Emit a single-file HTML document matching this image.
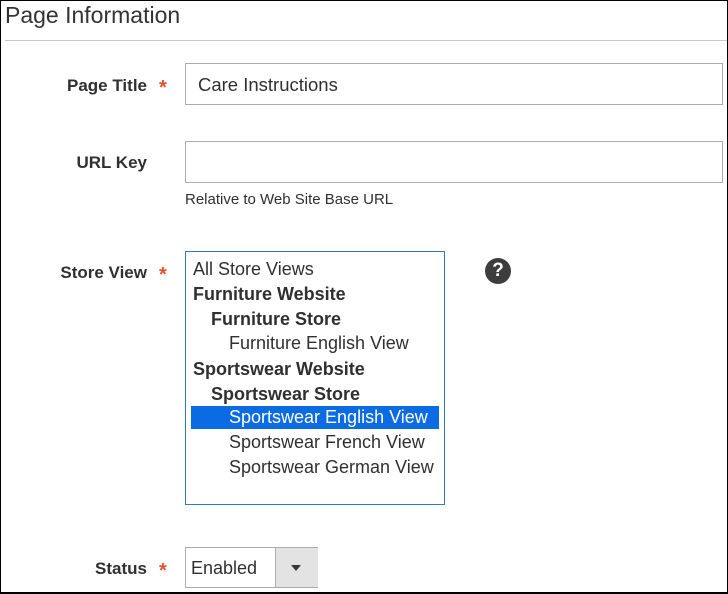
<!DOCTYPE html>
<html><head><style>
body{margin:0;width:728px;height:594px;overflow:hidden;font-family:"Liberation Sans",sans-serif;color:#303030;background:#fff;position:relative;}
.frame{position:absolute;left:0;top:0;width:726px;height:591px;border:1px solid #000;border-bottom-width:2px;}
.a{position:absolute;white-space:nowrap;}
.lbl{font-size:17px;font-weight:bold;text-align:right;width:147px;left:0;color:#303030;}
.star{color:#e0522b;font-size:20px;font-weight:bold;left:159px;}
.inp{border:1px solid #adadad;background:#fff;box-sizing:border-box;}
.opt{font-size:18px;left:193px;}
</style></head><body>
<div class="a" style="left:5px;top:2px;font-size:23px;color:#333;">Page Information</div>
<div class="a" style="left:5px;top:40px;width:723px;height:1px;background:#c8c8c8;"></div>

<div class="a lbl" style="top:76px;">Page Title</div>
<div class="a star" style="top:77px;">*</div>
<div class="a inp" style="left:185px;top:63px;width:538px;height:42px;"></div>
<div class="a" style="left:198px;top:74px;font-size:18.5px;">Care Instructions</div>

<div class="a lbl" style="top:153px;">URL Key</div>
<div class="a inp" style="left:185px;top:141px;width:538px;height:42px;"></div>
<div class="a" style="left:185px;top:191px;font-size:15px;">Relative to Web Site Base URL</div>

<div class="a lbl" style="top:263px;">Store View</div>
<div class="a star" style="top:264px;">*</div>
<div class="a" style="left:185px;top:251px;width:258px;height:252px;border:1px solid #2e78c2;"></div>
<div class="a" style="left:191px;top:406px;width:248px;height:23px;background:#0a6be3;"></div>
<div class="a opt" style="top:259px;">All Store Views</div>
<div class="a opt" style="top:284px;font-weight:bold;">Furniture Website</div>
<div class="a opt" style="top:309px;left:211px;font-weight:bold;">Furniture Store</div>
<div class="a opt" style="top:333px;left:229px;">Furniture English View</div>
<div class="a opt" style="top:359px;font-weight:bold;">Sportswear Website</div>
<div class="a opt" style="top:384px;left:211px;font-weight:bold;">Sportswear Store</div>
<div class="a opt" style="top:407px;left:229px;color:#fff;">Sportswear English View</div>
<div class="a opt" style="top:432px;left:229px;">Sportswear French View</div>
<div class="a opt" style="top:457px;left:229px;">Sportswear German View</div>
<div class="a" style="left:485px;top:258px;width:26px;height:26px;border-radius:50%;background:#3d3d3d;color:#fff;font-weight:bold;font-size:19px;text-align:center;line-height:26px;">?</div>

<div class="a lbl" style="top:559px;">Status</div>
<div class="a star" style="top:560px;">*</div>
<div class="a inp" style="left:185px;top:547px;width:133px;height:41px;"></div>
<div class="a" style="left:275px;top:548px;width:42px;height:39px;background:#e3e3e3;border-left:1px solid #adadad;"></div>
<div class="a" style="left:291px;top:565px;width:0;height:0;border-left:5px solid transparent;border-right:5px solid transparent;border-top:6px solid #41362f;"></div>
<div class="a" style="left:191px;top:558px;font-size:18px;">Enabled</div>
<div class="frame"></div>
</body></html>
